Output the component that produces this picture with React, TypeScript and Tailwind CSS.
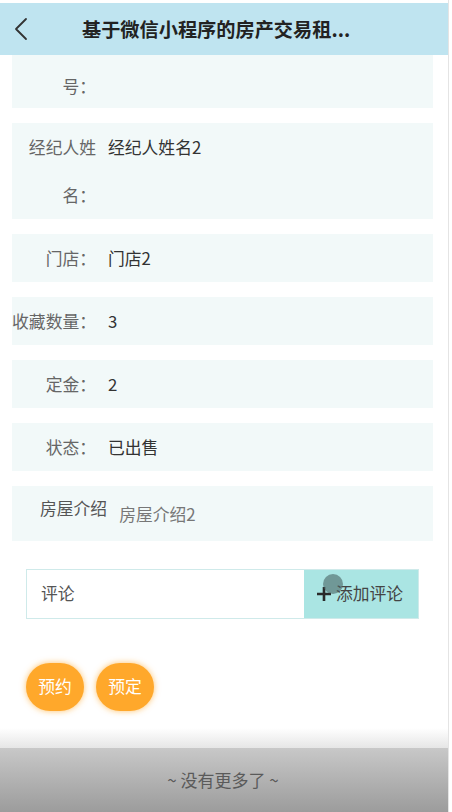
import React from 'react'

const FONT = { fontFamily: '"Noto Sans CJK SC", "Noto Sans", sans-serif' }

function Row({ label, value, h = 'h-[48px]' }: { label: React.ReactNode; value?: string; h?: string }) {
  return (
    <div className={`flex ${h} bg-[#f2f9f9]`}>
      <div className="w-[84px] shrink-0 text-right leading-[48px] text-[#666]">{label}</div>
      <div className="ml-[12px] leading-[48px] text-[#333]">{value}</div>
    </div>
  )
}

export default function App() {
  return (
    <div className="flex w-[452px] h-[812px] overflow-hidden bg-white text-[16.8px]" style={FONT}>
      <div className="flex flex-col w-[448px] h-full">
        {/* header */}
        <div className="h-[3px] bg-white" />
        <div className="flex items-center h-[52px] bg-[#bfe4f0]">
          <div className="w-[40px] flex justify-center pl-[2px]">
            <svg width="16" height="24" viewBox="0 0 16 24" fill="none">
              <path d="M13 2 L3 12 L13 22" stroke="#333" strokeWidth="1.8" strokeLinecap="round" strokeLinejoin="round" />
            </svg>
          </div>
          <div className="flex-1 pl-[42px] text-[19.2px] font-bold text-[#222] whitespace-nowrap">
            基于微信小程序的房产交易租...
          </div>
        </div>

        {/* detail rows */}
        <div className="flex flex-col gap-[15px] ml-[12px] w-[421px]">
          <div className="flex h-[53px] pt-[7px] bg-[#f2f9f9]">
            <div className="w-[84px] text-right leading-[48px] text-[#666]">号：</div>
          </div>
          <Row label="经纪人姓名：" value="经纪人姓名2" h="h-[96px]" />
          <Row label="门店：" value="门店2" />
          <Row label="收藏数量：" value="3" />
          <Row label="定金：" value="2" />
          <Row label="状态：" value="已出售" />
          <div className="flex h-[55px] pl-[28px] pt-[10px] bg-[#f2f9f9]">
            <div className="leading-[24px] text-[#555]">房屋介绍</div>
            <div className="ml-[12px] pt-[6px] leading-[24px] text-[#777]">房屋介绍2</div>
          </div>
        </div>

        {/* comment */}
        <div className="relative flex ml-[26px] mt-[28px] w-[393px] h-[50px] border border-[#cfeaea]">
          <div className="flex-1 flex items-center pl-[14px] bg-white text-[#555]">评论</div>
          <div className="flex items-center w-[114px] pl-[12px] bg-[#aae5e3] text-[#444]">
            <svg width="16" height="16" viewBox="0 0 16 16" className="mr-[4px]">
              <path d="M8 1 V15 M1 8 H15" stroke="#2a2a2a" strokeWidth="2.6" />
            </svg>
            <span>添加评论</span>
          </div>
          <div className="absolute left-[296px] top-[4px] w-[20px] h-[20px] rounded-full bg-[#4a6464]/60" />
        </div>

        {/* actions */}
        <div className="flex gap-[12px] ml-[26px] mt-[44px]">
          <button className="w-[58px] h-[48px] rounded-[24px] bg-[#ffa82b] text-white shadow-[0_0_6px_rgba(255,168,43,0.7)]">预约</button>
          <button className="w-[58px] h-[48px] rounded-[24px] bg-[#ffa82b] text-white shadow-[0_0_6px_rgba(255,168,43,0.7)]">预定</button>
        </div>

        {/* footer */}
        <div className="mt-auto">
          <div className="h-[20px] bg-gradient-to-b from-white to-[#e6e6e6]" />
          <div className="flex items-center justify-center h-[64px] bg-gradient-to-b from-[#c8c8c8] to-[#9c9c9c] text-[#5a5a5a] text-[17px] pr-[2px]">
            ~ 没有更多了 ~
          </div>
        </div>
      </div>
      <div className="w-[1px] h-full bg-[#e4e4e4]" />
      <div className="flex-1 h-full bg-white" />
    </div>
  )
}
